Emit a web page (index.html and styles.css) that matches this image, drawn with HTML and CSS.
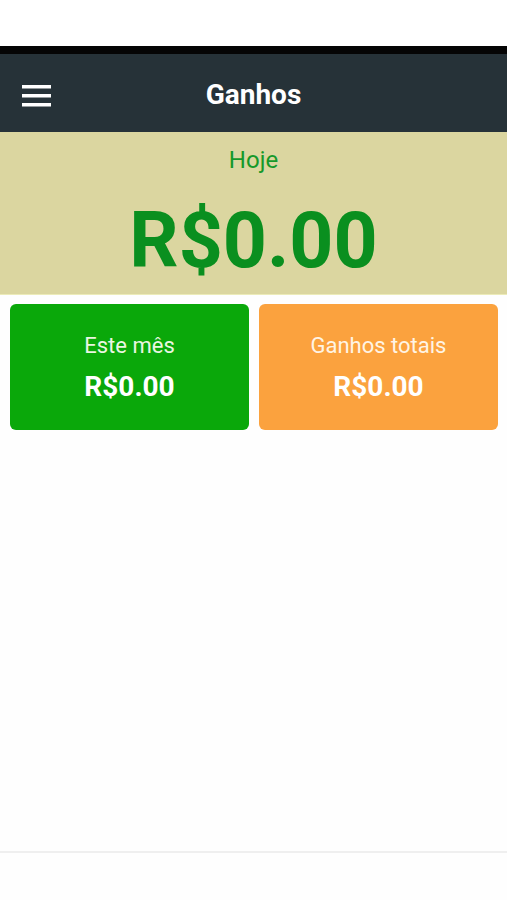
FILE: index.html
```html
<!DOCTYPE html>
<html lang="pt">
<head>
<meta charset="utf-8">
<title>Ganhos</title>
<link rel="stylesheet" href="styles.css">
</head>
<body>
<div class="status"></div>
<div class="blackbar"></div>
<header class="appbar">
  <button class="menu" aria-label="Menu">
    <svg width="30" height="24" viewBox="0 0 30 24"><rect x="0" y="2" width="29" height="3.5" fill="#fff"/><rect x="0" y="11" width="29" height="3.5" fill="#fff"/><rect x="0" y="20" width="29" height="3.5" fill="#fff"/></svg>
  </button>
  <h1 class="title">Ganhos</h1>
</header>
<section class="today">
  <div class="today-label">Hoje</div>
  <div class="today-value">R$0.00</div>
</section>
<section class="cards">
  <div class="card card-green">
    <div class="card-label">Este mês</div>
    <div class="card-value">R$0.00</div>
  </div>
  <div class="card card-orange">
    <div class="card-label">Ganhos totais</div>
    <div class="card-value">R$0.00</div>
  </div>
</section>
<div class="spacer"></div>
<div class="bottomline"></div>
</body>
</html>
```
FILE: styles.css
```css
html, body {
  margin: 0;
  padding: 0;
  height: 100%;
}
body {
  background: #fefefe;
  font-family: Roboto, "Noto Sans", "Liberation Sans", sans-serif;
  display: flex;
  flex-direction: column;
}
.status {
  height: 46px;
  background: #ffffff;
  flex: none;
}
.blackbar {
  height: 8px;
  background: #050505;
  flex: none;
}
.appbar {
  height: 78px;
  background: #263238;
  flex: none;
  display: flex;
  align-items: center;
  position: relative;
}
.menu {
  background: none;
  border: 0;
  padding: 0;
  margin: 3px 0 0 22px;
  display: flex;
  width: 30px;
  height: 24px;
}
.title {
  position: absolute;
  left: 0;
  right: 0;
  top: 0;
  bottom: 0;
  margin: 0;
  display: flex;
  align-items: center;
  justify-content: center;
  color: #ffffff;
  font-size: 28px;
  font-weight: 700;
  padding-top: 3px;
  pointer-events: none;
}
.today {
  height: 163px;
  background: #dbd6a0;
  border-bottom: 1px solid #ecebb8;
  flex: none;
  display: flex;
  flex-direction: column;
  align-items: center;
  box-sizing: border-box;
  padding-top: 12px;
}
.today-label {
  color: #16992a;
  font-size: 24px;
  line-height: 32px;
}
.today-value {
  color: #0a8f1f;
  font-size: 77px;
  font-weight: 700;
  line-height: 90px;
  margin-top: 20px;
}
.cards {
  display: flex;
  gap: 10px;
  padding: 9px 9px 0 10px;
  flex: none;
}
.card {
  flex: 1;
  height: 126px;
  border-radius: 6px;
  display: flex;
  flex-direction: column;
  align-items: center;
  box-sizing: border-box;
  padding-top: 29px;
}
.card-green {
  background: #0aa80a;
}
.card-orange {
  background: #fba23e;
}
.card-label {
  font-size: 22px;
  line-height: 26px;
}
.card-green .card-label {
  color: #eaf6e2;
}
.card-orange .card-label {
  color: #fff4e4;
}
.card-value {
  color: #ffffff;
  font-size: 28px;
  font-weight: 700;
  line-height: 32px;
  margin-top: 12px;
}
.spacer {
  height: 421px;
  flex: none;
}
.bottomline {
  height: 2px;
  background: #efefef;
  flex: none;
}
```
